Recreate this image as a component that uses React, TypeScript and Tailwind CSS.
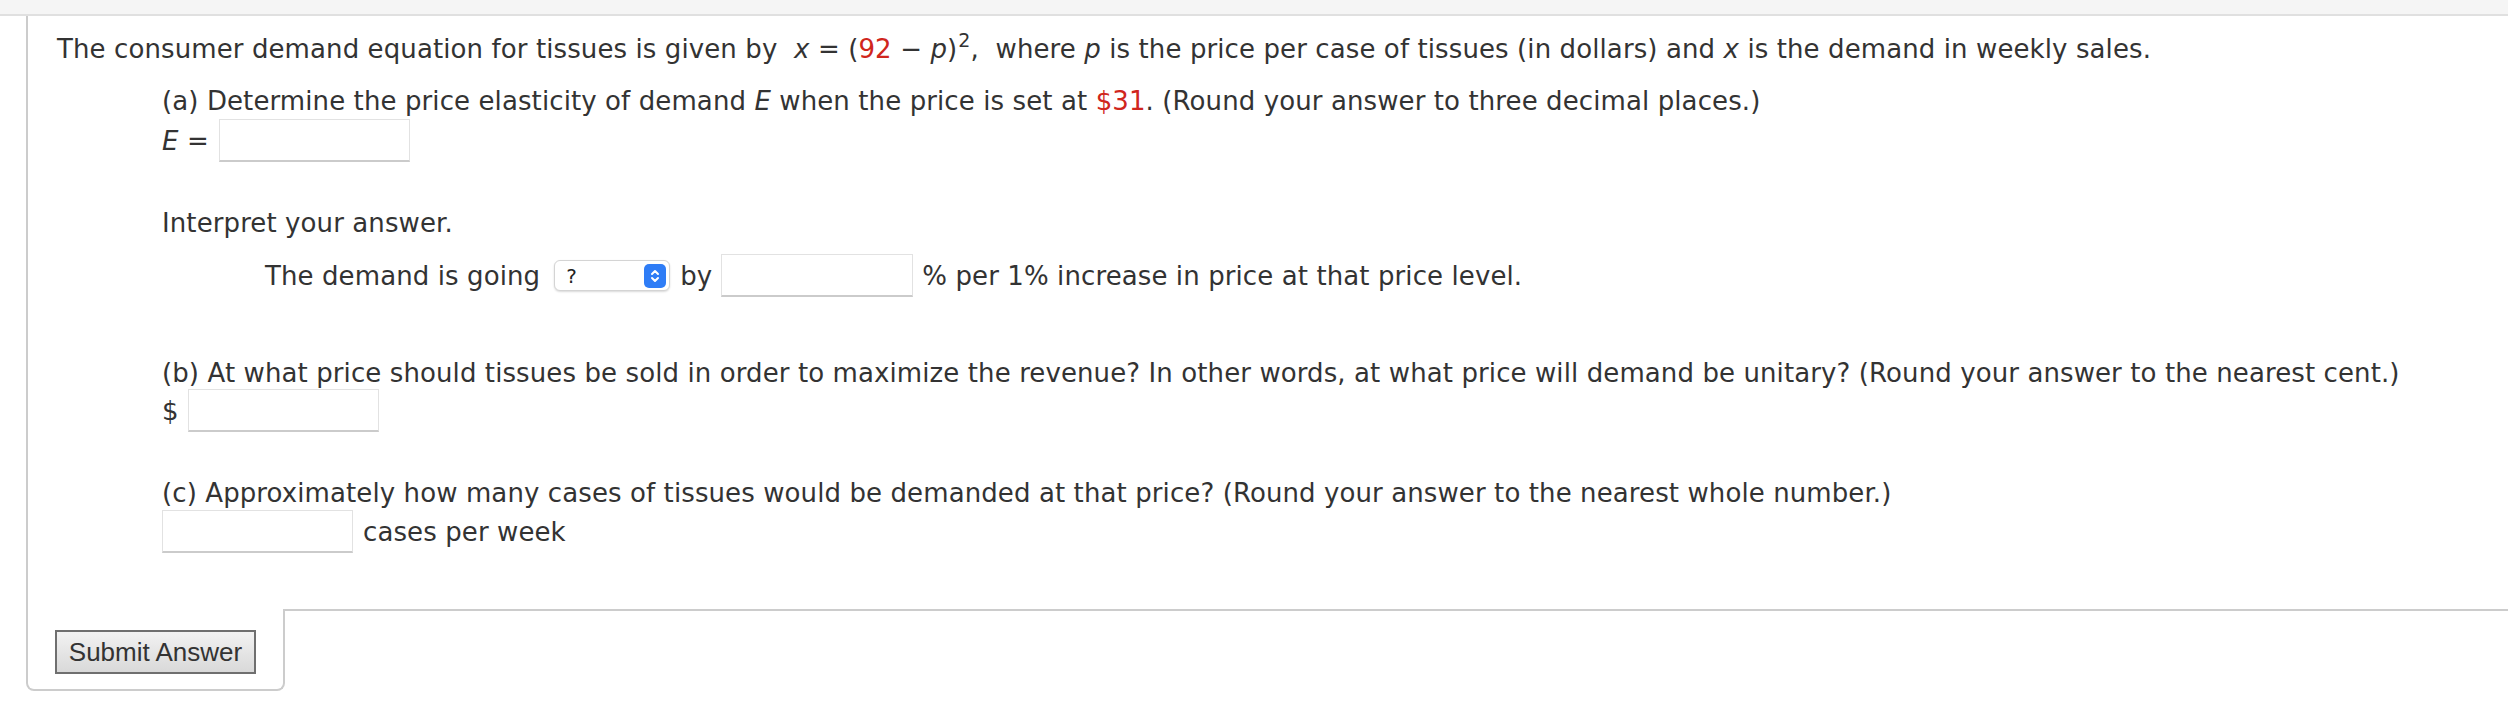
import React from 'react';

const Blank: React.FC<{ className?: string }> = ({ className = '' }) => (
  <div className={`h-[43px] w-[191px] bg-white border border-[#e2e2e2] border-b-2 border-b-[#cbcbcb] ${className}`} />
);

const Stepper: React.FC = () => (
  <span className="flex h-[24px] w-[22px] items-center justify-center rounded-[5px] bg-[#2f7df6]">
    <svg width="12" height="18" viewBox="0 0 12 18" fill="none" stroke="white" strokeWidth="2" strokeLinecap="round" strokeLinejoin="round">
      <path d="M3 7l3-3 3 3" />
      <path d="M3 11l3 3 3-3" />
    </svg>
  </span>
);

const App: React.FC = () => {
  return (
    <div className="min-h-[714px] w-[2508px] bg-white text-[#333] font-['DejaVu_Sans',Verdana,sans-serif] text-[26px] leading-[32px] tracking-[0.1px]">
      <div className="h-[16px] bg-[#f5f5f5] border-b-2 border-[#e0e0e0]" />

      <div className="ml-[26px] border-l-2 border-[#cccccc] pl-[29px] pt-[17px] pb-[56px] whitespace-nowrap">
        <p>
          The consumer demand equation for tissues is given by&nbsp;&nbsp;<i>x</i> = (
          <span className="text-[#d0261d]">92</span> − <i>p</i>)
          <sup className="text-[19px] relative -top-[11px] ml-[1px]">2</sup>,&nbsp;&nbsp;where <i>p</i> is the price per case of
          tissues (in dollars) and <i>x</i> is the demand in weekly sales.
        </p>

        <div className="ml-[105px] mt-[20px]">
          <p>
            (a) Determine the price elasticity of demand <i>E</i> when the price is set at{' '}
            <span className="text-[#d0261d]">$31</span>. (Round your answer to three decimal places.)
          </p>
          <div className="mt-[2px] flex items-center">
            <span>
              <i>E</i> =
            </span>
            <Blank className="ml-[10px]" />
          </div>

          <p className="mt-[45px]">Interpret your answer.</p>
          <div className="mt-[15px] ml-[103px] flex items-center">
            <span>The demand is going</span>
            <div className="ml-[14px] flex h-[31px] w-[116px] items-center justify-between rounded-[6px] border border-[#d4d4d4] bg-white pl-[11px] pr-[3px] shadow-[0_1px_2px_rgba(0,0,0,0.15)]">
              <span className="text-[20px] leading-none text-[#222]">?</span>
              <Stepper />
            </div>
            <span className="ml-[10px]">by</span>
            <Blank className="ml-[9px] w-[192px]" />
            <span className="ml-[9px]">% per 1% increase in price at that price level.</span>
          </div>

          <p className="mt-[60px]">
            (b) At what price should tissues be sold in order to maximize the revenue? In other words, at what price will
            demand be unitary? (Round your answer to the nearest cent.)
          </p>
          <div className="flex items-center">
            <span>$</span>
            <Blank className="ml-[9px]" />
          </div>

          <p className="mt-[45px]">
            (c) Approximately how many cases of tissues would be demanded at that price? (Round your answer to the nearest
            whole number.)
          </p>
          <div className="mt-[1px] flex items-center">
            <Blank className="w-[190px]" />
            <span className="ml-[10px]">cases per week</span>
          </div>
        </div>
      </div>

      <div className="flex">
        <div className="ml-[26px] w-[259px] border-l-2 border-r-2 border-b-2 border-[#cccccc] rounded-b-[8px] pl-[27px] pt-[21px] pb-[15px]">
          <button className="h-[44px] w-[201px] border-2 border-[#6f6f6f] bg-gradient-to-b from-[#f2f2f2] to-[#d9d9d9] font-['Liberation_Sans',Arial,sans-serif] text-[26px] leading-none tracking-normal text-[#333]">
            Submit Answer
          </button>
        </div>
        <div className="flex-1 border-t-2 border-[#cccccc]" />
      </div>
    </div>
  );
};

export default App;
